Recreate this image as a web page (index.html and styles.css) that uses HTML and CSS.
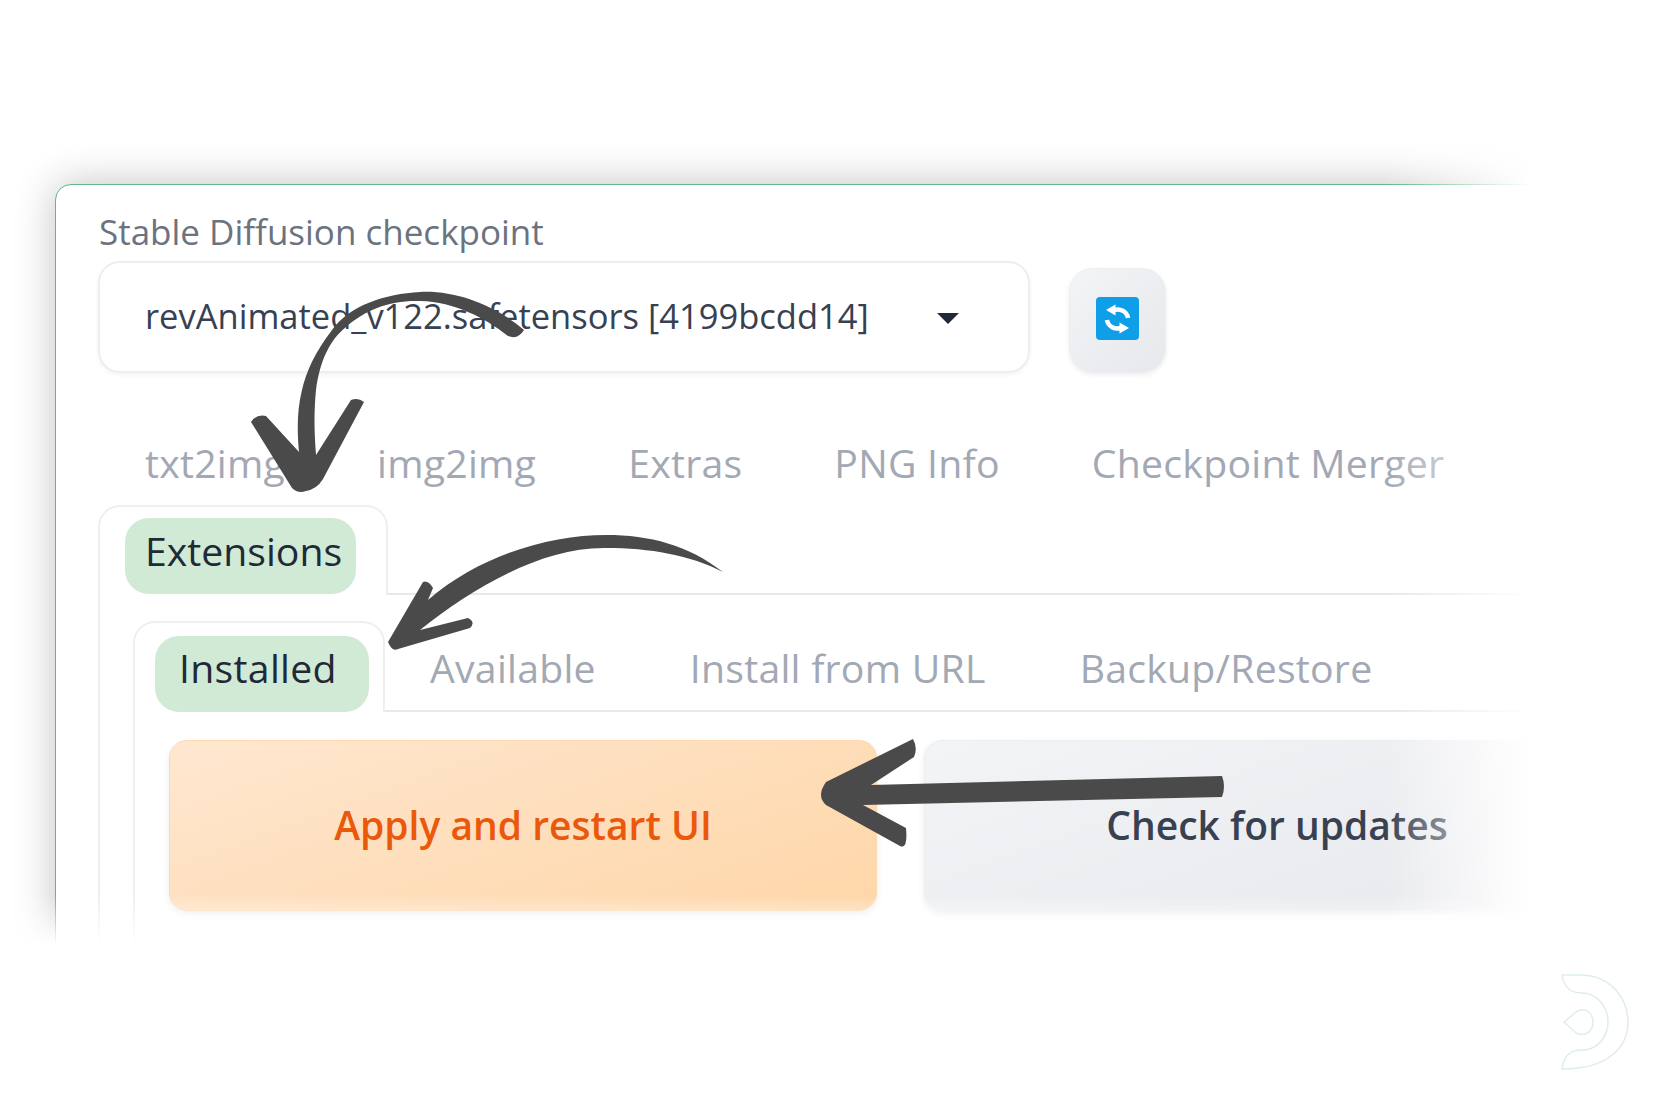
FILE: index.html
```html
<!DOCTYPE html>
<html lang="en">
<head>
<meta charset="utf-8">
<title>Extensions</title>
<link rel="stylesheet" href="styles.css">
</head>
<body>
<main class="stage">
  <section class="card">
    <div class="label">Stable Diffusion checkpoint</div>
    <div class="model-row">
      <div class="select">
        <span class="select-text">revAnimated_v122.safetensors [4199bcdd14]</span>
        <span class="caret"></span>
      </div>
      <button class="refresh" type="button" aria-label="Refresh">
        <svg class="refresh-icon" viewBox="0 0 43 43">
          <rect width="43" height="43" rx="4" fill="#0f9fe9"/>
          <path d="M32 21C31 14.500 24 11 18 13" fill="none" stroke="#fff" stroke-width="4.500"/>
          <path d="M10 13L19.500 7.500V18.500Z" fill="#fff"/>
          <path d="M11 23C12 29.500 19 33 25 31" fill="none" stroke="#fff" stroke-width="4.500"/>
          <path d="M33 31L23.500 36.500V25.500Z" fill="#fff"/>
        </svg>
      </button>
    </div>
    <nav class="tabs-main">
      <span class="tab">txt2img</span>
      <span class="tab">img2img</span>
      <span class="tab">Extras</span>
      <span class="tab">PNG Info</span>
      <span class="tab">Checkpoint Merger</span>
    </nav>
    <div class="tabbar">
      <div class="tab-box tab-box-outer"><span class="pill pill-outer">Extensions</span></div>
      <div class="tabbar-rest"></div>
    </div>
    <div class="panel panel-outer">
      <div class="tabbar">
        <div class="tab-box tab-box-inner"><span class="pill pill-inner">Installed</span></div>
        <div class="tabbar-rest tabs-sub">
          <span class="tab">Available</span>
          <span class="tab">Install from URL</span>
          <span class="tab">Backup/Restore</span>
        </div>
      </div>
      <div class="panel panel-inner">
        <div class="actions">
          <button class="btn btn-apply" type="button">Apply and restart UI</button>
          <button class="btn btn-check" type="button">Check for updates</button>
        </div>
      </div>
    </div>
  </section>
  <div class="fade fade-right"></div>
  <div class="fade fade-bottom"></div>
  <svg class="arrows" viewBox="0 0 1667 1111">
    <path d="M524 330C495 305 455 290 420 292C385 294 350 305 332 330C315 352 306 372 302 390C297 410 297 430 299 452L266 416Q256 414 251 422L292 488Q298 494 306 491Q317 489 323 479L364 402Q358 397 351 400L316 455C314 430 314 410 316 390C320 360 330 340 346 327C365 310 390 300 420 301C455 302 485 318 508 336Q518 340 524 330Z"/>
    <path d="M723 572C688 545 650 535 606 535C550 535 480 555 428 600L433 588Q428 580 423 582L388 642Q392 652 398 649L470 628Q476 622 468 618L420 630C470 590 540 547 606 548C650 548 690 555 723 572Z"/>
    <path d="M1222 776L871 785L914 757Q918 748 913 739L826 782Q816 796 826 805L900 846Q908 850 906 828L863 805L1222 797Q1226 786 1222 776Z"/>
  </svg>
  <svg class="logo" viewBox="0 0 127 130">
    <path d="M22 15H40C72 15 88 40 88 62C88 84 72 109 22 109C24 92 34 90 42 90C58 90 68 76 68 62C68 48 58 33 42 33C32 33 24 28 22 15Z" fill="none" stroke="#dfeee5" stroke-width="1.500"/>
    <path d="M24 62L36 52C46 46 53 54 53 62C53 70 46 78 36 73Z" fill="none" stroke="#dfeee5" stroke-width="1.500"/>
  </svg>
</main>
</body>
</html>
```

FILE: styles.css
```css
* {
  box-sizing: border-box;
}

html,
body {
  margin: 0;
  width: 1667px;
  height: 1111px;
  overflow: hidden;
  background: #fff;
}

body {
  font-family: "Open Sans", "Noto Sans", sans-serif;
}

.stage {
  position: relative;
  width: 1667px;
  height: 1111px;
  padding: 184px 0 0 55px;
  overflow: hidden;
}

.card {
  width: 1700px;
  height: 900px;
  padding: 24px 0 0 42px;
  background: #fff;
  border: 1.500px solid #5fbb80;
  border-radius: 16px 0 0 0;
  box-shadow: 0 0 42px rgba(0, 0, 0, .24);
}

.label {
  height: 46px;
  margin-bottom: 6px;
  padding-left: 1px;
  font-size: 35px;
  line-height: 46px;
  color: #6b7280;
}

.model-row {
  display: flex;
  align-items: flex-end;
  gap: 39px;
}

.select {
  display: flex;
  align-items: center;
  justify-content: space-between;
  width: 932px;
  height: 112px;
  padding: 0 69px 3px 45px;
  background: #fff;
  border: 2px solid #eceef0;
  border-radius: 22px;
  box-shadow: 0 2px 4px rgba(0, 0, 0, .05);
}

.select-text {
  font-size: 34.500px;
  color: #374151;
}

.caret {
  width: 0;
  height: 0;
  margin-top: 6px;
  border-top: 11px solid #1f2937;
  border-left: 11px solid transparent;
  border-right: 11px solid transparent;
}

.refresh {
  display: flex;
  align-items: center;
  justify-content: center;
  width: 97px;
  height: 105px;
  padding: 0 0 4px;
  background: linear-gradient(135deg, #f3f4f6, #e7e8ec);
  border: 1px solid #eceef0;
  border-radius: 24px;
  box-shadow: 0 2px 5px rgba(0, 0, 0, .07);
}

.refresh-icon {
  display: block;
  width: 43px;
  height: 43px;
}

.tabs-main {
  display: flex;
  gap: 92px;
  height: 56px;
  margin: 62px 0 14px 47px;
  align-items: center;
}

.tab {
  font-size: 39.200px;
  letter-spacing: .25px;
  line-height: 56px;
  color: #a2a8b4;
  white-space: nowrap;
}

.tabbar {
  display: flex;
}

.tab-box {
  flex: none;
  display: flex;
  align-items: flex-end;
  background: #fff;
  border: 2px solid #eeeff1;
  border-bottom: 0;
  border-radius: 22px 22px 0 0;
}

.tab-box-outer {
  width: 290px;
  height: 90px;
  padding-left: 25px;
}

.tab-box-inner {
  width: 252px;
  height: 91px;
  padding-left: 20px;
}

.tabbar-rest {
  flex: 1;
  border-bottom: 2px solid #e7e8ec;
}

.tabs-sub {
  display: flex;
  align-items: center;
  gap: 94px;
  padding: 4px 0 0 45px;
}

.pill {
  display: flex;
  align-items: center;
  font-size: 39.200px;
  color: #1f2937;
  background: #d1ead6;
  border-radius: 24px;
}

.pill-outer {
  width: 231px;
  height: 76px;
  margin-bottom: 1px;
  padding: 0 0 12px 20px;
}

.pill-inner {
  width: 214px;
  height: 76px;
  padding: 0 0 14px 24px;
  letter-spacing: .3px;
}

.panel {
  border-left: 2px solid #eeeff1;
}

.panel-outer {
  padding: 26px 0 0 33px;
}

.panel-inner {
  padding: 28px 0 0 34px;
  height: 400px;
}

.actions {
  display: flex;
  gap: 47px;
}

.btn {
  height: 171px;
  padding: 0 0 2px;
  font-family: inherit;
  font-size: 39px;
  font-weight: 600;
  border-radius: 18px;
  box-shadow: 0 3px 7px rgba(0, 0, 0, .08);
}

.btn-apply {
  width: 708px;
  color: #ea580c;
  background: linear-gradient(160deg, #ffe7d0, #fed6a8);
  border: 1px solid #fdd9b2;
}

.btn-check {
  width: 706px;
  color: #374151;
  background: linear-gradient(160deg, #f3f4f6, #e7e8ec);
  border: 1px solid #eceef0;
}

.fade {
  position: absolute;
  pointer-events: none;
}

.fade-right {
  top: 0;
  bottom: 0;
  left: 1385px;
  right: 0;
  background: linear-gradient(90deg, rgba(255, 255, 255, 0), #fff 145px);
}

.fade-bottom {
  left: 0;
  right: 0;
  top: 895px;
  bottom: 0;
  background: linear-gradient(180deg, rgba(255, 255, 255, 0), #fff 50px);
}

.arrows {
  position: absolute;
  inset: 0;
  width: 1667px;
  height: 1111px;
  fill: #4a4a4a;
}

.logo {
  position: absolute;
  left: 1540px;
  top: 960px;
  width: 127px;
  height: 130px;
}
```
